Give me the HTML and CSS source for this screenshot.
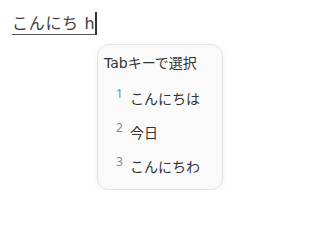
FILE: index.html
```html
<!DOCTYPE html>
<html lang="ja">
<head>
<meta charset="utf-8">
<link rel="stylesheet" href="styles.css">
</head>
<body>
<div class="editor">
  <div class="line"><span class="composing">こんにち h</span><span class="caret"></span></div>
  <div class="popup">
    <div class="hint">Tabキーで選択</div>
    <div class="item"><span class="num sel">1</span><span class="cand">こんにちは</span></div>
    <div class="item"><span class="num">2</span><span class="cand">今日</span></div>
    <div class="item"><span class="num">3</span><span class="cand">こんにちわ</span></div>
  </div>
</div>
</body>
</html>
```
FILE: styles.css
```css
html, body { margin: 0; padding: 0; background: #fff; }
body { font-family: "DejaVu Sans", "Noto Sans CJK JP", sans-serif; color: #333; }
.editor { padding: 12px 0 0 12px; }
.line { display: flex; align-items: flex-start; height: 24px; font-size: 16px; color: #3c3c3c; }
.composing { border-bottom: 1px solid #555; line-height: 21px; height: 21px; padding-top: 1px; letter-spacing: 0.7px; }
.caret { width: 2px; height: 23px; background: #333; margin-left: 0; }
.popup {
  margin: 8px 0 0 85px;
  width: 126px;
  height: 146px;
  box-sizing: border-box;
  border: 1px solid #e3e3e3;
  border-radius: 12px;
  background: #fafafa;
  box-shadow: 0 2px 6px rgba(0,0,0,0.06);
  padding: 7px 0 0 6px;
}
.hint { font-size: 14px; line-height: 22px; color: #333; margin-bottom: 7px; }
.item { display: flex; align-items: flex-start; height: 34px; padding-left: 12px; }
.num { font-family: "Noto Sans", sans-serif; font-size: 12px; line-height: 14px; color: #858c96; width: 14px; margin-top: 6px; }
.num.sel { color: #5a93c8; }
.cand { font-family: "Noto Sans CJK JP", sans-serif; font-size: 14px; line-height: 22px; margin-top: 6px; color: #333; }
```
